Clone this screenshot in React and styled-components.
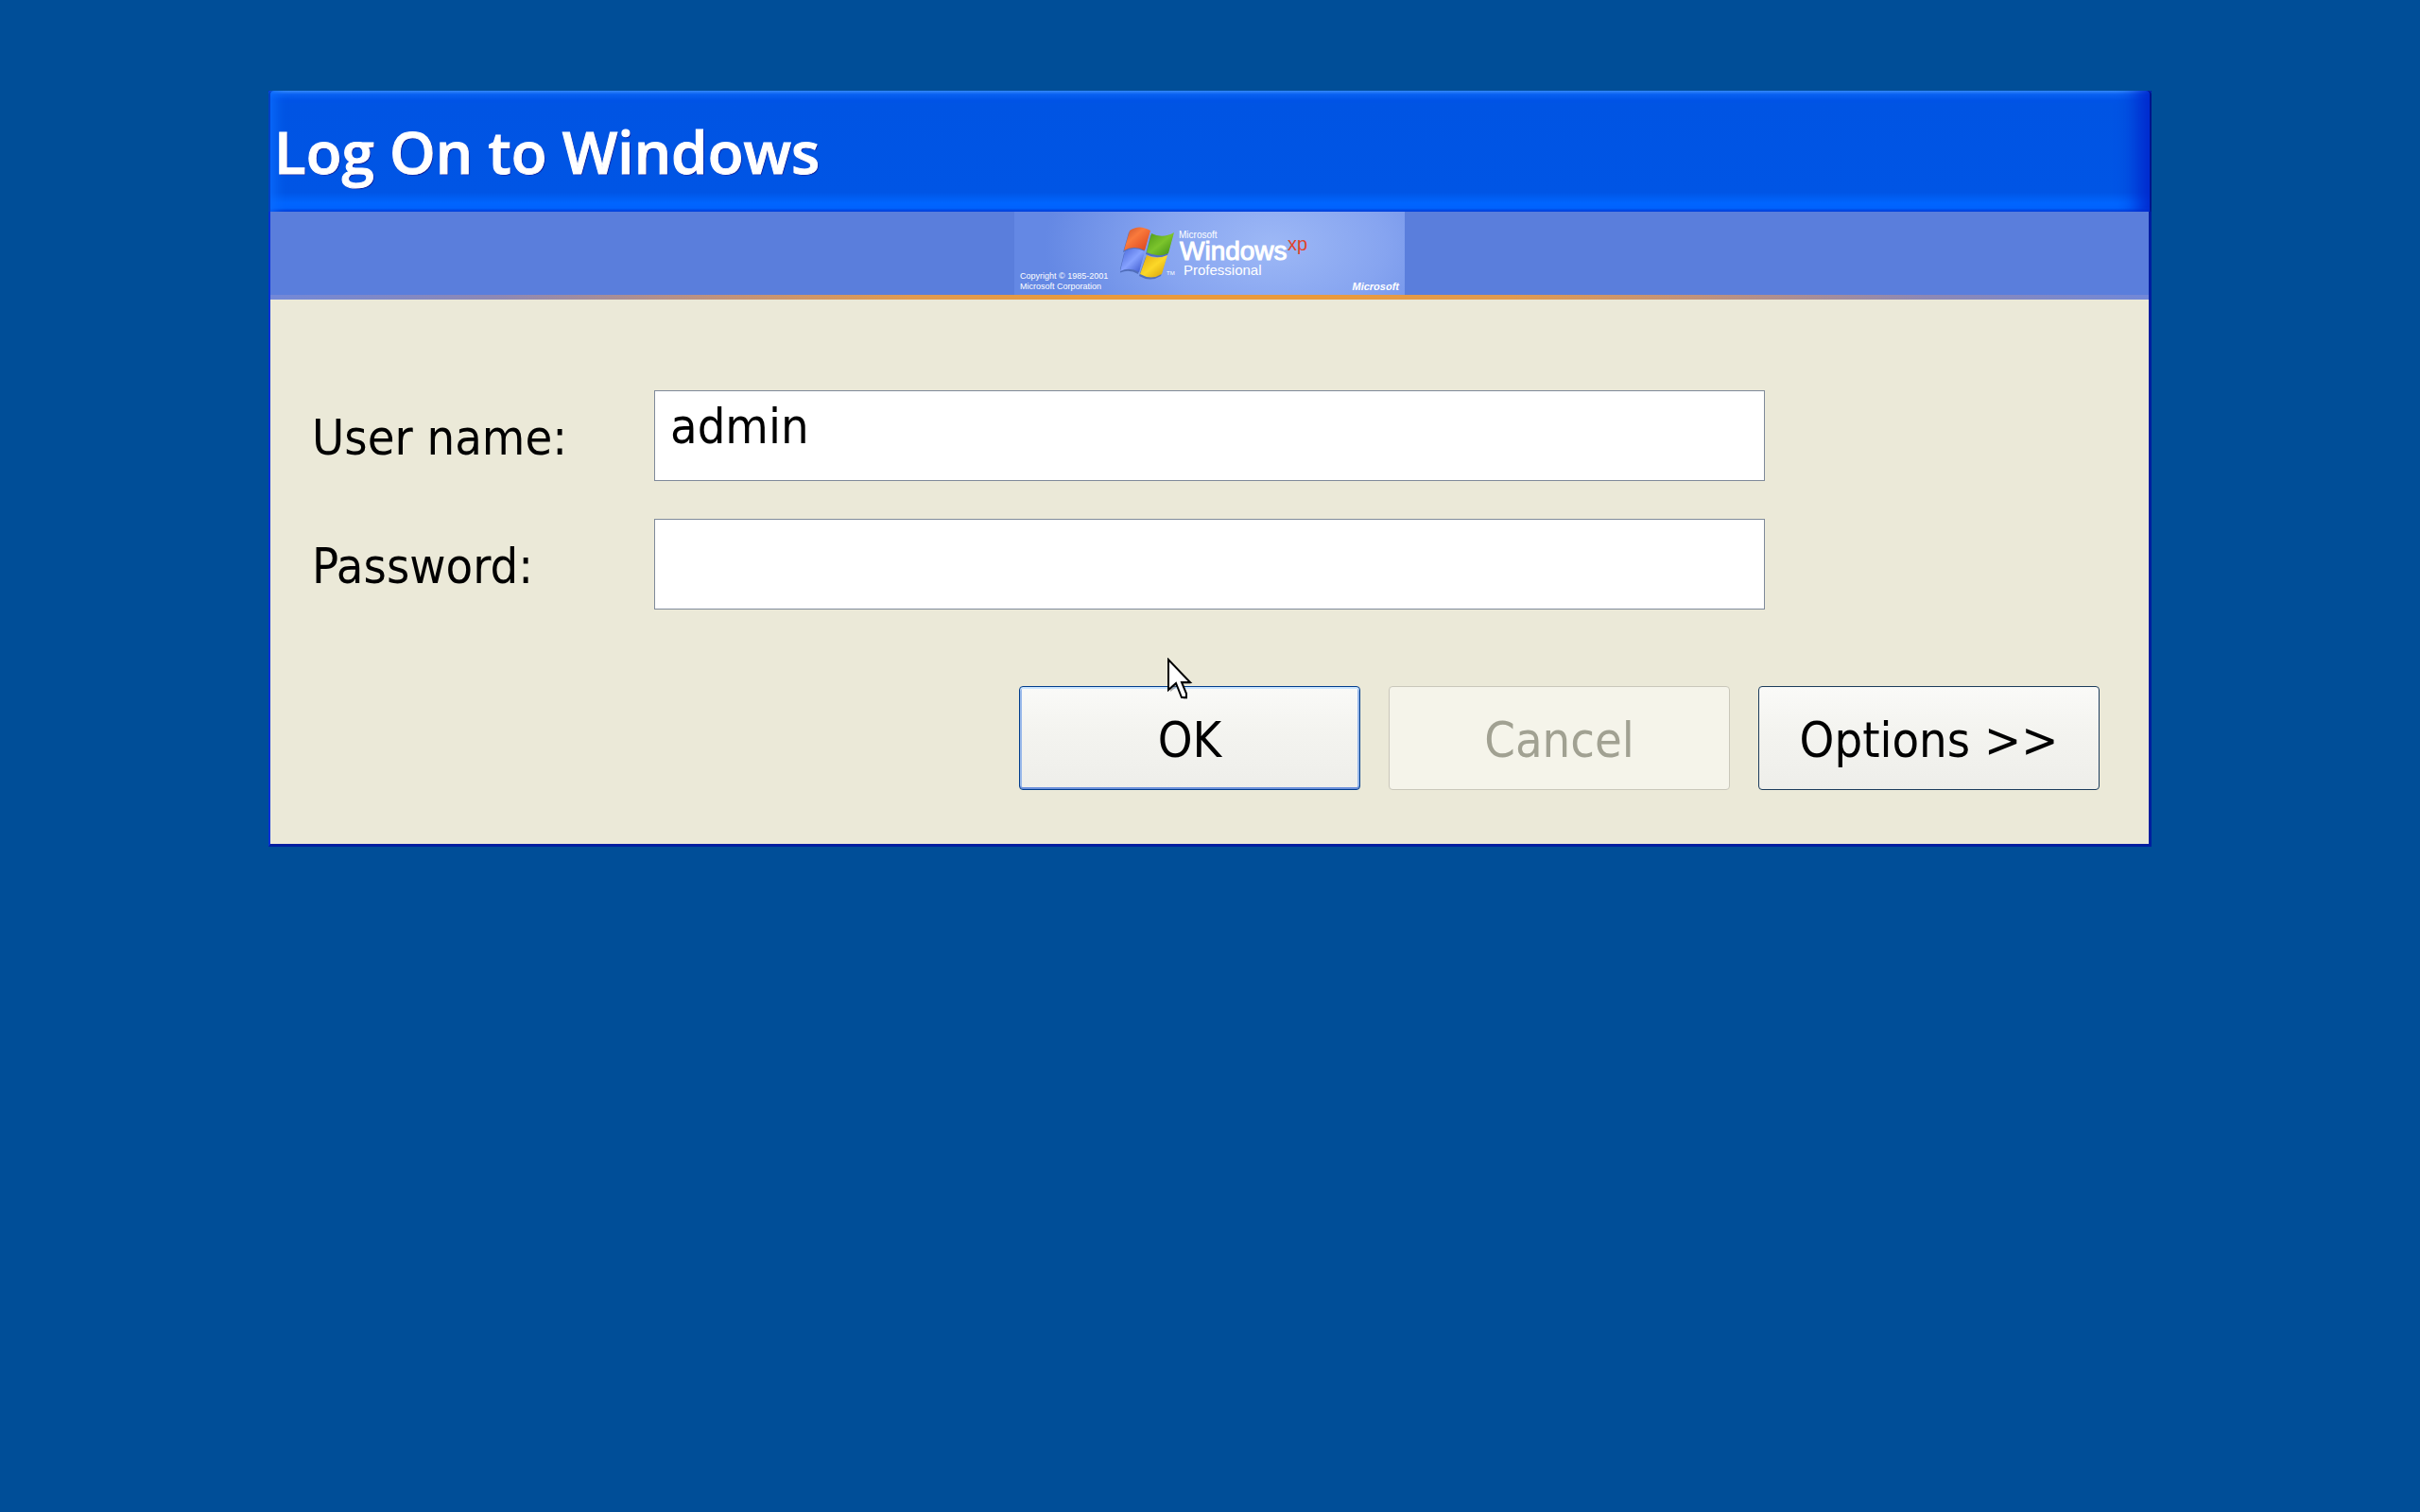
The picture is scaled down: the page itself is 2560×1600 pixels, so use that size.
import { useState } from "react"
import styled, { createGlobalStyle } from "styled-components"

const GlobalStyle = createGlobalStyle`
    *{
        box-sizing: border-box;
    }
    body{
        margin: 0;
        background-color: #004e98;
        font-family: "DejaVu Sans Condensed", "Noto Sans", sans-serif;
    }
`
const Desktop = styled.main`
    min-height: 100vh;
    display: flex;
    justify-content: center;
    align-items: flex-start;
    padding: 96px 11%;
`
const Window = styled.section`
    position: relative;
    width: 100%;
    max-width: 1992px;
    background-color: #ebe9d8;
    border-style: solid;
    border-width: 0 3px 3px 2px;
    border-color: #00138c #001ea0 #001ea0 #0831d9;
`
const TitleBar = styled.header`
    height: 128px;
    margin: 0 -3px 0 -2px;
    padding: 0 6px;
    display: flex;
    align-items: center;
    border-radius: 4px 4px 0 0;
    background: linear-gradient(#3d95ff, #0a64f4 3%, #0054e6 8%, #0054e3 12%, #0055e5 84%, #0066ff 93%, #0066ff 97%, #003dd7 100%);
    box-shadow: inset 2px 0 #0240c8, inset 16px 0 14px -10px #0a6cff, inset -2px 0 #00138c, inset -28px 0 22px -14px #0026cc;
`
const Title = styled.h1`
    margin: 0;
    color: white;
    font-family: "Open Sans", sans-serif;
    font-size: 62px;
    font-weight: 600;
    line-height: 80px;
    -webkit-text-stroke: 1px white;
    text-shadow: 1px 1px 1px #0f1089;
`
const Banner = styled.div`
    height: 93px;
    display: flex;
    flex-direction: column;
    align-items: center;
    background-color: #5a7edc;
`
const BannerImage = styled.div`
    flex: 1;
    width: 413px;
    padding: 0 6px 3px;
    display: flex;
    align-items: flex-end;
    color: white;
    background: radial-gradient(ellipse 240px 150px at 66% 40%, #9db8f6, #86a4f0 50%, #6488e4 100%);
`
const Stripe = styled.div`
    width: 100%;
    height: 5px;
    background: linear-gradient(to right, #7288d8, #8e88b4 12%, #c0927c 24%, #e09a50 34%, #ea9a3c 44%, #ea9a3c 56%, #e09a50 66%, #c0927c 76%, #8e88b4 88%, #7288d8);
`
const Copyright = styled.p`
    width: 106px;
    margin: 0;
    font-family: "Liberation Sans", Arial, sans-serif;
    font-size: 9px;
    line-height: 11px;
    white-space: nowrap;
`
const Brand = styled.span`
    margin-left: auto;
    font-family: "Liberation Sans", Arial, sans-serif;
    font-size: 11px;
    font-weight: 700;
    font-style: italic;
    line-height: 11px;
`
const Form = styled.form`
    padding: 96px 52px 57px 44px;
`
const Field = styled.div`
    display: flex;
    align-items: center;
    margin-bottom: 40px;
`
const Label = styled.label`
    width: 362px;
    padding-top: 4px;
    font-size: 52px;
    line-height: 64px;
`
const Input = styled.input`
    flex: 1;
    max-width: 1175px;
    height: 96px;
    padding: 0 16px 20px;
    border: 1px solid #7f8a9a;
    background-color: white;
    color: black;
    font-family: inherit;
    font-size: 52px;
    outline: none;
`
const Actions = styled.div`
    display: flex;
    justify-content: flex-end;
    gap: 30px;
    padding-top: 41px;
`
const Button = styled.button`
    width: 361px;
    height: 110px;
    padding: 4px 0 0;
    border: 1px solid ${props => props.$primary ? "#003c8c" : "#1c3c5c"};
    border-radius: 4px;
    background: linear-gradient(#fafaf8, #f4f4f0 40%, #eeeeea);
    box-shadow: ${props => props.$primary && "inset 0 2px #cee7ff, inset 0 -2px #6c90dc, inset 2px 0 #98b8ea, inset -2px 0 #98b8ea"};
    color: black;
    font-family: inherit;
    font-size: 52px;

    &:disabled{
        border-color: #c9c7ba;
        background: #f5f4ea;
        color: #a1a192;
    }
`
const Pointer = styled.svg`
    position: absolute;
    left: 948px;
    top: 600px;
    width: 28px;
    height: 46px;
    pointer-events: none;
`

const WindowsLogo = () => (
    <svg width="200" height="70" viewBox="0 0 200 70" role="img" aria-label="Microsoft Windows XP Professional">
        <defs>
            <linearGradient id="red" x1="0" y1="0" x2="1" y2="1">
                <stop offset="0" stopColor="#c8502c" />
                <stop offset="0.4" stopColor="#fa7a3c" />
                <stop offset="1" stopColor="#d8401c" />
            </linearGradient>
            <linearGradient id="green" x1="0" y1="0" x2="1" y2="1">
                <stop offset="0" stopColor="#4c9818" />
                <stop offset="0.5" stopColor="#7cc42c" />
                <stop offset="1" stopColor="#3c8c14" />
            </linearGradient>
            <linearGradient id="blue" x1="0" y1="0" x2="1" y2="1">
                <stop offset="0" stopColor="#4866d8" />
                <stop offset="0.5" stopColor="#86a2ff" />
                <stop offset="1" stopColor="#3450c8" />
            </linearGradient>
            <linearGradient id="yellow" x1="0" y1="0" x2="1" y2="1">
                <stop offset="0" stopColor="#e0a810" />
                <stop offset="0.5" stopColor="#fcd828" />
                <stop offset="1" stopColor="#d09a08" />
            </linearGradient>
        </defs>
        <g fill="#34509c" opacity="0.6" transform="translate(-1 2)">
            <path d="M10 5Q20-2 32 5L26 26Q15 20 4 26Z" />
            <path d="M33 8Q45 14 57 7L51 29Q40 34 28 28Z" />
            <path d="M5 27Q14 21 26 27L20 49Q10 43 0 48Z" />
            <path d="M28 31Q39 36 50 31L44 51Q33 58 21 51Z" />
        </g>
        <path fill="url(#red)" d="M10 5Q20-2 32 5L26 26Q15 20 4 26Z" />
        <path fill="url(#green)" d="M33 8Q45 14 57 7L51 29Q40 34 28 28Z" />
        <path fill="url(#blue)" d="M5 27Q14 21 26 27L20 49Q10 43 0 48Z" />
        <path fill="url(#yellow)" d="M28 31Q39 36 50 31L44 51Q33 58 21 51Z" />
        <g fill="white" fontFamily="Liberation Sans, Arial, sans-serif">
            <text x="49" y="52" fontSize="6">TM</text>
            <text x="62" y="13" fontSize="10">Microsoft</text>
            <text x="63" y="36" fontSize="28" stroke="white" strokeWidth="1">Windows</text>
            <text x="67" y="52" fontSize="15">Professional</text>
            <text x="177" y="26" fontSize="20" fill="#e0442c">xp</text>
        </g>
    </svg>
)

const Cursor = () => (
    <Pointer viewBox="-1 -1 14 23" aria-hidden="true">
        <path d="M0 0V16L4 13L7 20H9V19L6 12H11Z" fill="#666" opacity="0.5" transform="translate(1 1)" />
        <path d="M0 0V16L4 12.5L7 20H9.500V18L7 12H11.500Z" fill="white" stroke="black" strokeWidth="1" />
    </Pointer>
)

const App = () => {

    const [userName, setUserName] = useState("admin");
    const [password, setPassword] = useState("");

    return (
        <Desktop>
            <GlobalStyle />
            <Window>
                <TitleBar>
                    <Title>Log On to Windows</Title>
                </TitleBar>
                <Banner>
                    <BannerImage>
                        <Copyright>Copyright © 1985-2001<br />Microsoft Corporation</Copyright>
                        <WindowsLogo />
                        <Brand>Microsoft</Brand>
                    </BannerImage>
                    <Stripe />
                </Banner>
                <Form onSubmit={(e)=>e.preventDefault()}>
                    <Field>
                        <Label htmlFor="username">User name:</Label>
                        <Input id="username" value={userName} onChange={(e)=>setUserName(e.target.value)} />
                    </Field>
                    <Field>
                        <Label htmlFor="password">Password:</Label>
                        <Input id="password" type="password" value={password} onChange={(e)=>setPassword(e.target.value)} />
                    </Field>
                    <Actions>
                        <Button type="submit" $primary>OK</Button>
                        <Button type="button" disabled>Cancel</Button>
                        <Button type="button">Options &gt;&gt;</Button>
                    </Actions>
                </Form>
                <Cursor />
            </Window>
        </Desktop>
    )
}

export default App
